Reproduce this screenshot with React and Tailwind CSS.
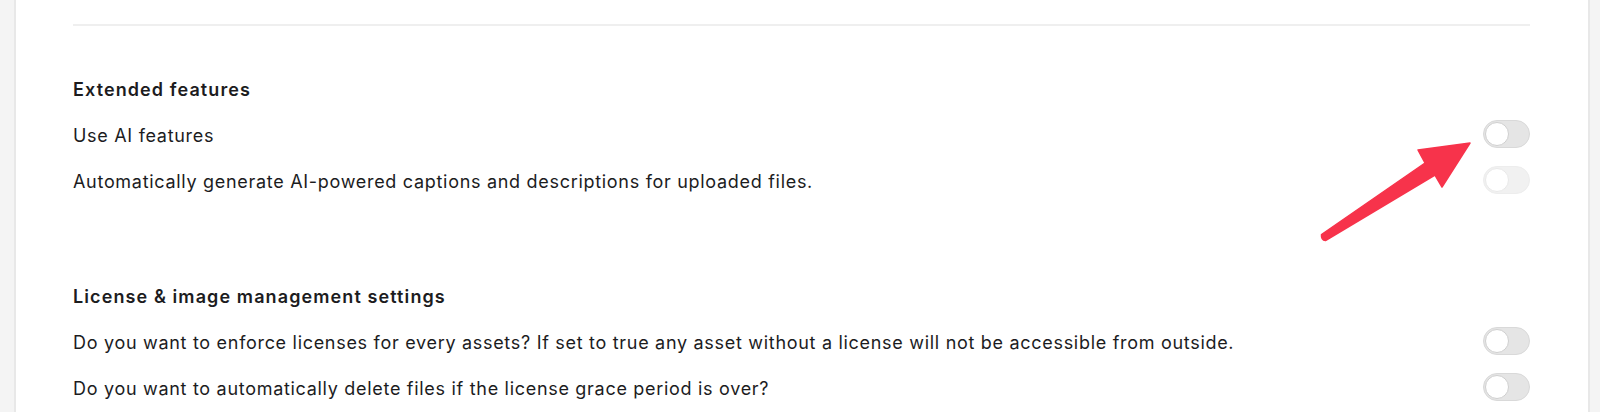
import React, { useState } from 'react';

const Toggle = ({ checked, onChange, disabled }) => (
  <button
    type="button"
    onClick={() => !disabled && onChange(!checked)}
    className={`relative mb-[3px] h-[28px] w-[47px] shrink-0 rounded-full border ${
      disabled ? 'border-[#ededed] bg-[#f1f1f1]' : 'border-[#d9d9d9] bg-[#e5e5e5]'
    }`}
  >
    <span
      className={`absolute top-[1px] h-[24px] w-[24px] rounded-full bg-white border ${
        disabled ? 'border-[#e9e9e9]' : 'border-[#cfcfcf]'
      } ${checked ? 'left-[20px]' : 'left-[1px]'}`}
    />
  </button>
);

const Row = ({ label, checked, onChange, disabled }) => (
  <div className="flex h-[46px] items-center justify-between">
    <span className="text-[18px] tracking-[0.7px] text-[#1c1c1e]">{label}</span>
    <Toggle checked={checked} onChange={onChange} disabled={disabled} />
  </div>
);

const Heading = ({ children }) => (
  <div className="flex h-[46px] items-center">
    <h2 className="text-[18px] font-semibold tracking-[1.1px] text-[#1c1c1e]">{children}</h2>
  </div>
);

export default function App() {
  const [useAi, setUseAi] = useState(false);
  const [captions, setCaptions] = useState(false);
  const [enforce, setEnforce] = useState(false);
  const [autoDelete, setAutoDelete] = useState(false);

  return (
    <div className="flex h-[412px] w-full overflow-hidden bg-[#f4f4f4] font-['Inter',sans-serif]">
      <div className="w-[14px] shrink-0" />
      <div className="relative flex-1 border-x-2 border-[#e8e8e8] bg-white pl-[57px] pr-[58px]">
        <div className="mt-[24px] h-[2px] bg-[#efefef]" />

        {/* Extended features */}
        <section className="mt-[40px]">
          <Heading>Extended features</Heading>
          <Row label="Use AI features" checked={useAi} onChange={setUseAi} />
          <Row
            label="Automatically generate AI-powered captions and descriptions for uploaded files."
            checked={captions}
            onChange={setCaptions}
            disabled={!useAi}
          />
        </section>

        {/* License & image management */}
        <section className="mt-[69px]">
          <Heading>License &amp; image management settings</Heading>
          <Row
            label="Do you want to enforce licenses for every assets? If set to true any asset without a license will not be accessible from outside."
            checked={enforce}
            onChange={setEnforce}
          />
          <Row
            label="Do you want to automatically delete files if the license grace period is over?"
            checked={autoDelete}
            onChange={setAutoDelete}
          />
        </section>

        {/* annotation arrow */}
        <svg
          className="pointer-events-none absolute left-[1274px] top-[130px]"
          width="200"
          height="120"
          viewBox="1290 130 200 120"
        >
          <path
            d="M1321.5 234.5 L1425 163 L1418 150 L1470 143 L1442 187 L1435 175 L1325.5 240.5 Q1321 240 1321.5 234.5 Z"
            fill="#f7334b"
            stroke="#f7334b"
            strokeWidth="1.5"
            strokeLinejoin="round"
          />
        </svg>
      </div>
      <div className="w-[10px] shrink-0" />
    </div>
  );
}
